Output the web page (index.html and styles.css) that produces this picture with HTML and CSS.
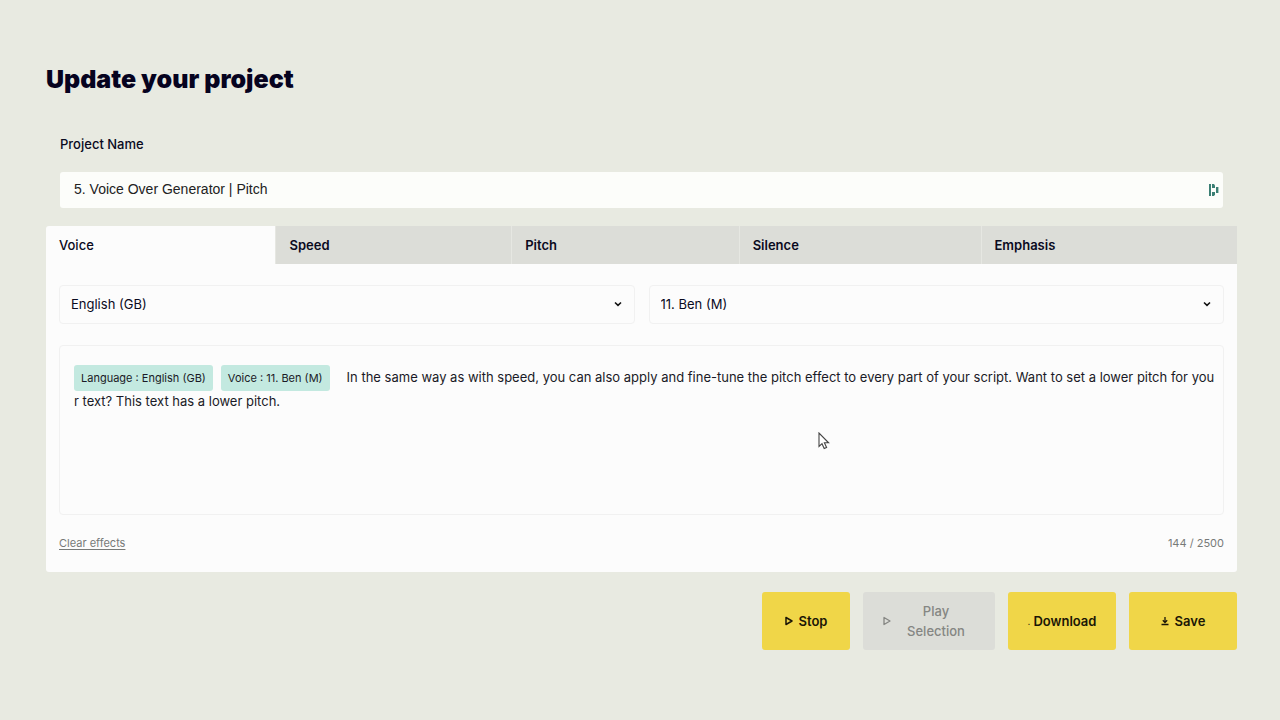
FILE: index.html
```html
<!DOCTYPE html>
<html lang="en">
<head>
    <meta charset="UTF-8">
    <meta name="viewport" content="width=device-width, initial-scale=1.0">
    <title>Update your project</title>
    <link rel="stylesheet" href="styles.css">
</head>
<body>
    <main class="page">
        <h1>Update your project</h1>

        <div class="field">
            <label for="project-name">Project Name</label>
            <div class="input-wrap">
                <input type="text" id="project-name" value="5. Voice Over Generator | Pitch">
                <svg class="input-icon" width="10" height="14" viewBox="0 0 10 14" fill="#3b7f74">
                    <rect x="0" y="1" width="2" height="12"/>
                    <path d="M3 1H5L6 2.5V5H3Z"/>
                    <path d="M3 9H6V11.5L5 13H3Z"/>
                    <rect x="7" y="4" width="2.4" height="6"/>
                </svg>
            </div>
        </div>

        <div class="tabs" role="tablist">
            <button class="tab active" role="tab" aria-selected="true">Voice</button>
            <button class="tab" role="tab">Speed</button>
            <button class="tab" role="tab">Pitch</button>
            <button class="tab" role="tab">Silence</button>
            <button class="tab" role="tab">Emphasis</button>
        </div>

        <section class="panel">
            <div class="selects">
                <div class="select-wrap">
                    <select aria-label="Language">
                        <option>English (GB)</option>
                    </select>
                    <svg class="chevron" width="8" height="6" viewBox="0 0 8 6" fill="none" stroke="#111" stroke-width="1.6">
                        <path d="M1 1.5L4 4.3L7 1.5"/>
                    </svg>
                </div>
                <div class="select-wrap">
                    <select aria-label="Voice">
                        <option>11. Ben (M)</option>
                    </select>
                    <svg class="chevron" width="8" height="6" viewBox="0 0 8 6" fill="none" stroke="#111" stroke-width="1.6">
                        <path d="M1 1.5L4 4.3L7 1.5"/>
                    </svg>
                </div>
            </div>

            <div class="editor" role="textbox" aria-multiline="true" aria-label="Script" contenteditable="true" spellcheck="false"><span class="tag" contenteditable="false">Language : English (GB)</span><span class="tag last" contenteditable="false">Voice : 11. Ben (M)</span>In the same way as with speed, you can also apply and fine-tune the pitch effect to every part of your script. Want to set a lower pitch for your text? This text has a lower pitch.</div>

            <div class="panel-footer">
                <a href="#" class="clear">Clear effects</a>
                <span class="count">144 / 2500</span>
            </div>
        </section>

        <div class="actions">
            <button class="btn">
                <svg width="8" height="10" viewBox="0 0 8 10" fill="none" stroke="currentColor" stroke-width="1.5" stroke-linejoin="round">
                    <path d="M1 1.5V8.5L7 5Z"/>
                </svg>
                Stop
            </button>
            <button class="btn wide" disabled>
                <svg width="8" height="10" viewBox="0 0 8 10" fill="none" stroke="currentColor" stroke-width="1.3" stroke-linejoin="round">
                    <path d="M1 1.5V8.5L7 5Z"/>
                </svg>
                <span>Play Selection</span>
            </button>
            <button class="btn download"><span class="dot">.</span>Download</button>
            <button class="btn save">
                <svg width="8" height="10" viewBox="0 0 8 10" fill="none" stroke="currentColor" stroke-width="1.3">
                    <path d="M4 1V6.5M1.8 4.2L4 6.6L6.2 4.2M0.5 8.5H7.5"/>
                </svg>
                Save
            </button>
        </div>

        <svg class="cursor" width="12" height="18" viewBox="0 0 12 18" fill="#fff" stroke="#444" stroke-width="1.1">
            <path d="M1 1V14.5L4 11.7L6.2 16.6L8.6 15.5L6.4 10.8H10.6Z"/>
        </svg>
    </main>
</body>
</html>
```

FILE: styles.css
```css
* {
    box-sizing: border-box;
}
body {
    margin: 0;
    background-color: #e8eae1;
    color: #0a0a1e;
    font-family: Inter, "Open Sans", sans-serif;
    font-size: 13px;
}
button, select {
    font-family: inherit;
    font-size: 13px;
    color: inherit;
}
.page {
    position: relative;
    padding: 62px 43px 0 46px;
}
h1 {
    margin: 0;
    font-size: 25px;
    line-height: 34px;
    font-weight: 900;
    color: #06031f;
}
.field {
    padding: 38px 14px 0;
}
.field label {
    display: block;
    line-height: 20px;
    font-weight: 500;
    margin-bottom: 18px;
}
.input-wrap {
    position: relative;
}
.input-wrap input {
    display: block;
    width: 100%;
    height: 36px;
    border: none;
    border-radius: 3px;
    padding: 0 30px 2px 14px;
    background: #fcfdfa;
    font-family: "Liberation Sans", Arial, sans-serif;
    font-size: 14px;
    color: #222;
}
.input-icon {
    position: absolute;
    right: 4px;
    top: 11px;
}
.tabs {
    display: flex;
    margin-top: 18px;
}
.tab {
    flex: 1 1 auto;
    height: 38px;
    padding: 0 13px;
    border: none;
    border-left: 1px solid #e6e7e2;
    background: #dcddd8;
    text-align: left;
    font-weight: 600;
}
.tab.active {
    border-left: none;
    border-radius: 3px 0 0 0;
    background: #fcfcfc;
    font-weight: 500;
}
.panel {
    padding: 21px 13px 19px;
    background: #fcfcfc;
    border-radius: 0 0 3px 3px;
}
.selects {
    display: flex;
    gap: 14px;
}
.select-wrap {
    position: relative;
    flex: 1;
}
.select-wrap select {
    display: block;
    width: 100%;
    height: 39px;
    padding: 0 30px 2px 11px;
    border: 1px solid #f1f1f1;
    border-radius: 4px;
    background: #fcfcfc;
    appearance: none;
}
.chevron {
    position: absolute;
    right: 13px;
    top: 16px;
}
.editor {
    min-height: 170px;
    margin-top: 21px;
    padding: 20px 4px 20px 14px;
    border: 1px solid #f1f1f1;
    border-radius: 4px;
    line-height: 23px;
    word-break: break-all;
    color: #1a1a26;
}
.tag {
    margin-right: 8px;
    padding: 6px 7px;
    border-radius: 3px;
    background: #c3e9e0;
    font-size: 11px;
}
.tag.last {
    margin-right: 17px;
}
.panel-footer {
    display: flex;
    justify-content: space-between;
    margin-top: 18px;
    font-size: 11px;
    line-height: 20px;
    color: #777a78;
}
.clear {
    color: inherit;
    text-underline-offset: 2px;
}
.actions {
    display: flex;
    justify-content: flex-end;
    gap: 13px;
    margin-top: 20px;
}
.btn {
    display: flex;
    align-items: center;
    justify-content: center;
    gap: 6px;
    min-width: 88px;
    height: 58px;
    padding: 0 20px;
    border: none;
    border-radius: 3px;
    background: #f0d648;
    color: #1b1606;
    font-weight: 600;
    line-height: 20px;
}
.btn:disabled {
    background: #dcddd8;
    color: #858683;
    font-weight: 500;
}
.btn.wide {
    width: 132px;
}
.btn.wide span {
    flex: 1;
}
.btn.download, .btn.save {
    width: 108px;
}
.btn.download {
    gap: 3px;
}
.dot {
    font-size: 10px;
    font-weight: 400;
}
.cursor {
    position: absolute;
    left: 818px;
    top: 432px;
}
```
